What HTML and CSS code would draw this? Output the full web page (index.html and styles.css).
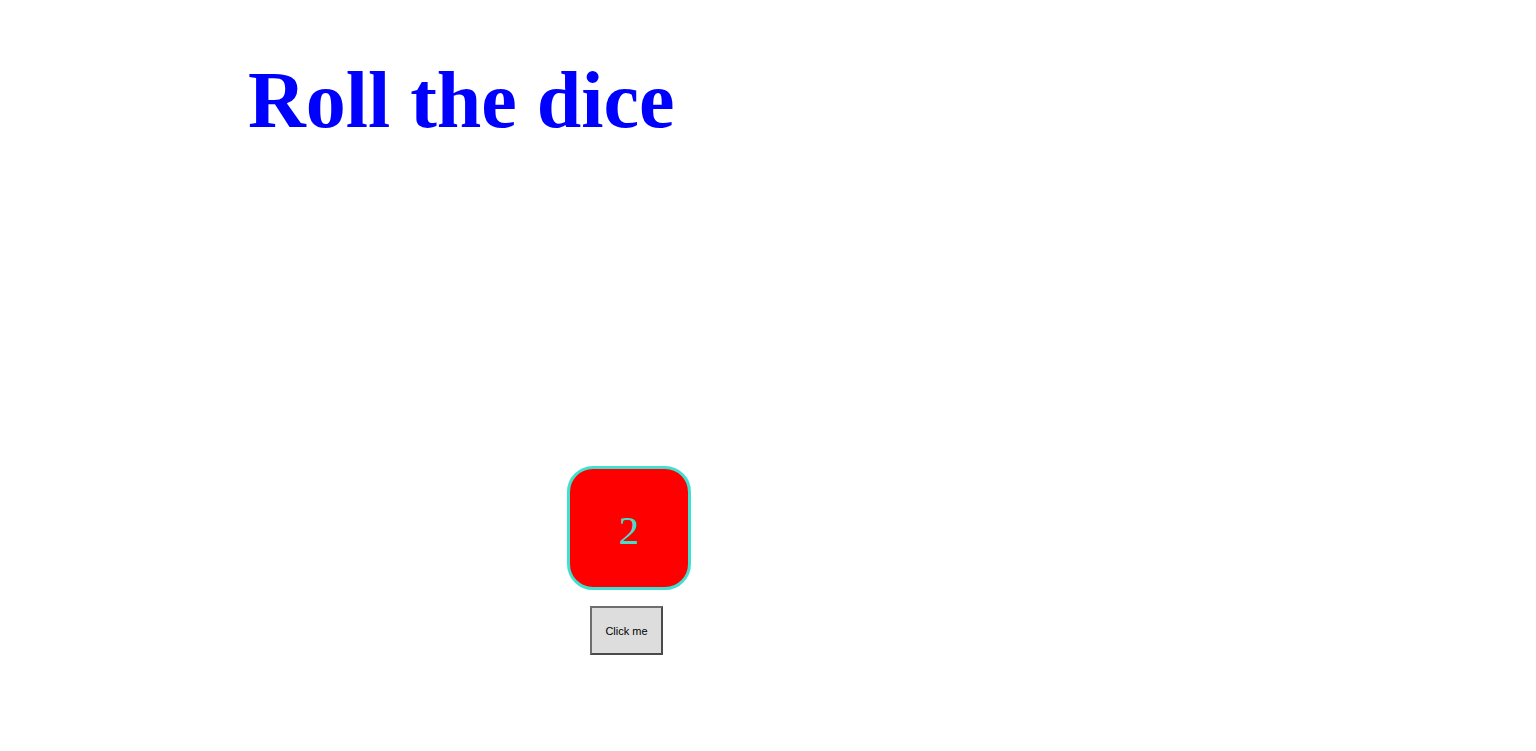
FILE: index.html
```html
<!DOCTYPE html>
<html>
<head>
<meta charset="utf-8">
<link rel="stylesheet" href="styles.css">
</head>
<body>
<h1 class="title">Roll the dice</h1>
<div class="stage">
  <div class="dice">2</div>
  <button class="roll">Click me</button>
</div>
</body>
</html>
```
FILE: styles.css
```css
body {
  margin: 0;
  background: #fff;
  font-family: "Liberation Serif", "Times New Roman", serif;
}
.title {
  margin: 55px 0 0 248px;
  font-size: 80px;
  font-weight: bold;
  color: #0000ff;
  line-height: normal;
}
.stage {
  display: flex;
  flex-direction: column;
  align-items: flex-start;
  margin: 320px 0 0 567px;
}
.dice {
  box-sizing: border-box;
  width: 124px;
  height: 124px;
  border: 3px solid #40e0d0;
  border-radius: 26px;
  background: #ff0000;
  color: #40e0d0;
  font-family: "Liberation Serif", "Times New Roman", serif;
  font-size: 41px;
  display: flex;
  align-items: center;
  justify-content: center;
  padding-top: 4px;
}
.roll {
  box-sizing: border-box;
  margin: 16px 0 0 23px;
  width: 73px;
  height: 49px;
  background: #dddddd;
  border: 2px solid;
  border-color: #6e6e6e #4a4a4a #4a4a4a #6e6e6e;
  font-family: "Liberation Sans", Arial, sans-serif;
  font-size: 11px;
  color: #000;
  padding: 0;
}
```
